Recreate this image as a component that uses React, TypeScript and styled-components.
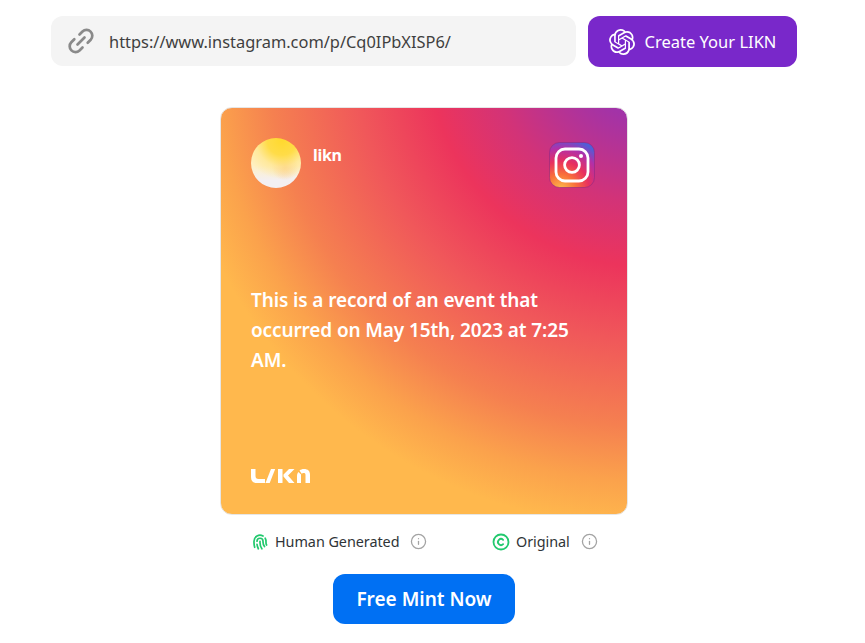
import React from "react";
import styled, { createGlobalStyle } from "styled-components";
import { Copyright, Info } from "lucide-react";
import { SiOpenai } from "react-icons/si";
import { TbFingerprint } from "react-icons/tb";

const Global = createGlobalStyle`
  html, body { margin: 0; padding: 0; background: #fff; overflow: hidden; }
  body { font-family: "Noto Sans", "Open Sans", "Liberation Sans", sans-serif; }
`;
const Page = styled.div`
  width: 848px; display: flex; flex-direction: column; align-items: center; padding-top: 16px;
`;
const TopBar = styled.div`display: flex; align-items: flex-start; gap: 12px; margin-bottom: 40px;`;
const UrlField = styled.div`
  width: 525px; height: 50px; box-sizing: border-box; background: #f4f4f4; border-radius: 12px;
  display: flex; align-items: center; gap: 15px; padding-left: 17px;
`;
const LinkIcon = styled.svg`color: #8a8a8a; flex: none;`;
const UrlText = styled.span`font-size: 16.4px; color: #3f3f3f;`;
const CreateButton = styled.button`
  width: 209px; height: 51px; border: 0; border-radius: 12px; background: #7928ca; color: #fff;
  display: flex; align-items: center; justify-content: center; gap: 10px; padding: 0;
  font: inherit; font-size: 16.5px;
`;
const Card = styled.div`
  width: 408px; height: 408px; box-sizing: border-box; border-radius: 12px; border: 1px solid #e6e6e6;
  padding: 30px; display: flex; flex-direction: column; color: #fff;
  background: radial-gradient(circle at 104% -14%, #9b2fb0 0, #a233a8 65px, #d23378 150px, #ec345c 215px, #f0585a 290px, #f58050 375px, #fba24c 430px, #ffb84d 475px);
`;
const CardHead = styled.div`display: flex; justify-content: space-between; align-items: flex-start; margin-bottom: 97px;`;
const Author = styled.div`display: flex; gap: 12px;`;
const Avatar = styled.div`
  width: 50px; height: 50px; border-radius: 50%;
  background:
    radial-gradient(circle at 62% 5%, #ffd92e 0, #ffdc48 26%, rgba(255,228,130,.6) 46%, rgba(255,240,200,0) 68%),
    radial-gradient(circle at 68% 58%, rgba(250,190,130,.65) 0, rgba(250,200,150,0) 30%),
    linear-gradient(#fff0b8, #fff0c4 55%, #f3eff2 85%);
`;
const AuthorName = styled.span`font-size: 16px; font-weight: 700; line-height: 20px; margin-top: 7px; letter-spacing: -0.3px;`;
const Badge = styled.svg`margin: 4px 2px 0 0;`;
const Statement = styled.p`margin: 0; font-size: 19px; font-weight: 600; line-height: 30px; letter-spacing: -0.12px; flex: 1;`;
const Logo = styled.svg`display: block;`;
const Facts = styled.div`display: flex; margin: 17px 0 23px; width: 408px; padding-left: 31px; box-sizing: border-box;`;
const Fact = styled.div<{ $w: number }>`display: flex; align-items: center; width: ${p => p.$w}px; font-size: 14.4px; color: #2f3437; letter-spacing: -0.05px;`;
const FactIcon = styled.span`display: flex; color: #22c96e; margin-right: 6px;`;
const FactInfo = styled(Info)`color: #a3a3a3; margin-left: 11px;`;
const MintButton = styled.button`
  width: 182px; height: 50px; border: 0; border-radius: 12px; background: #0070f3; color: #fff;
  font: inherit; font-size: 19px; font-weight: 600; padding: 0;
`;

export default function App() {
  return (
    <Page>
      <Global />
      <TopBar>
        <UrlField>
          <LinkIcon width="26" height="26" viewBox="0 0 26 26" fill="none" stroke="currentColor" strokeWidth="2.7" strokeLinecap="round">
            <path d="M11.500 6.500l3-3a5.800 5.800 0 0 1 8.200 8.200l-3 3" />
            <path d="M14.500 19.500l-3 3a5.800 5.800 0 0 1-8.200-8.200l3-3" />
            <path d="M9.500 16.500l7-7" />
          </LinkIcon>
          <UrlText>https://www.instagram.com/p/Cq0IPbXISP6/</UrlText>
        </UrlField>
        <CreateButton><SiOpenai size={26} />Create Your LIKN</CreateButton>
      </TopBar>
      <Card>
        <CardHead>
          <Author>
            <Avatar />
            <AuthorName>likn</AuthorName>
          </Author>
          <Badge width="46" height="46" viewBox="0 0 46 46">
            <defs>
              <radialGradient id="ig" cx="25%" cy="105%" r="115%">
                <stop offset="0" stopColor="#fdc04d" />
                <stop offset=".3" stopColor="#f9703a" />
                <stop offset=".55" stopColor="#e8305f" />
                <stop offset=".8" stopColor="#b32fa8" />
                <stop offset="1" stopColor="#4f5ed8" />
              </radialGradient>
            </defs>
            <rect x=".5" y=".5" width="45" height="45" rx="10" fill="url(#ig)" stroke="#8e2a80" strokeOpacity=".6" />
            <rect x="7" y="7" width="32" height="32" rx="9" fill="none" stroke="#fff" strokeWidth="2.8" />
            <circle cx="23" cy="23" r="7.4" fill="none" stroke="#fff" strokeWidth="2.8" />
            <circle cx="32" cy="14" r="2" fill="#fff" />
          </Badge>
        </CardHead>
        <Statement>This is a record of an event that occurred on May 15th, 2023 at 7:25 AM.</Statement>
        <Logo width="60" height="16" viewBox="0 0 60 16" fill="#fff">
          <path d="M0 1h4.500v7c0 2 1 3 3 3H14v4H6c-4 0-6-2-6-6z" />
          <path d="M14.500 15l5.500-14h4.200l-5.500 14z" />
          <path d="M27 1h4.500v14H27zM32.500 6.500L38 1h5.500l-6.500 6.500 6.500 7.500H38l-5.500-6.500z" />
          <path d="M46 15V8c0-2 .5-3 1.500-4L50 6.500V15zM48.500 2.500C50 1.500 51 1 53 1c4 0 6 2 6 6v8h-4.500V7c0-1.500-.5-2-2-2-.8 0-1.300.2-1.800.7z" />
        </Logo>
      </Card>
      <Facts>
        <Fact $w={241}>
          <FactIcon><TbFingerprint size={18} strokeWidth={2.3} /></FactIcon>
          Human Generated
          <FactInfo size={17} strokeWidth={1.8} />
        </Fact>
        <Fact $w={120}>
          <FactIcon><Copyright size={18} strokeWidth={2.4} /></FactIcon>
          Original
          <FactInfo size={17} strokeWidth={1.8} />
        </Fact>
      </Facts>
      <MintButton>Free Mint Now</MintButton>
    </Page>
  );
}
